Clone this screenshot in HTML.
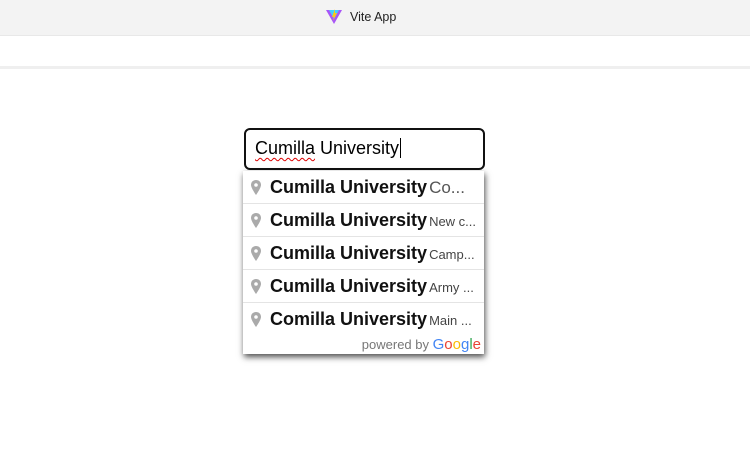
<!DOCTYPE html><html><head><style>
body{margin:0;width:750px;height:454px;background:#fff;font-family:"Liberation Sans",Arial,sans-serif;position:relative;overflow:hidden}
.top{position:absolute;left:0;top:0;width:750px;height:35px;background:#f3f3f3;border-bottom:1px solid #e8e8e8}
.top span{position:absolute;left:350px;top:10px;font-size:12.5px;color:#222}
.line{position:absolute;left:0;top:66px;width:750px;height:3px;background:#efefef}
.inp{position:absolute;left:244px;top:128px;width:237px;height:38px;border:2px solid #111;border-radius:6px;box-sizing:content-box}
.inp span{position:absolute;left:9px;top:8px;font-size:18px;color:#000}
.inp u{text-decoration:underline wavy #d00;text-decoration-thickness:1px;text-underline-offset:3px}
.cur{display:inline-block;width:1px;height:20px;background:#000;vertical-align:-4px;margin-left:1px}
.dd{position:absolute;left:243px;top:171px;width:241px;height:183px;background:#fff;box-shadow:1px 3px 6px rgba(0,0,0,.7)}
.r{height:32px;border-bottom:1px solid #e4e4e4;position:relative;white-space:nowrap;overflow:hidden}
.r svg{position:absolute;left:8px;top:9px}
.r .t{position:absolute;left:27px;top:6px;width:210px;overflow:hidden}
.r b{font-size:18px;color:#111}
.r i{font-style:normal;font-size:13px;color:#444;margin-left:2px}
.p{position:absolute;right:3px;bottom:1px;font-size:13px;color:#777}
</style></head><body>
<div class="top"><svg style="position:absolute;left:326px;top:9px" width="16" height="15" viewBox="0 0 16 15"><path d="M0 1 L16 1 L8 15Z" fill="#a855f7"/><path d="M3 1 L13 1 L8 10Z" fill="#41d1ff"/><path d="M9 0 L6 8 L8 8 L7 12 L11 4 L9 4Z" fill="#ffc517"/></svg><span>Vite App</span></div>
<div class="line"></div>
<div class="inp"><span><u>Cumilla</u> University<i class="cur"></i></span></div>
<div class="dd">
<div class="r"><svg width="10" height="15" viewBox="0 0 10 15"><path d="M5 0C2 0 0 2 0 5c0 3 5 10 5 10s5-7 5-10C10 2 8 0 5 0z" fill="#aaa"/><circle cx="5" cy="5" r="1.8" fill="#fff"/></svg><div class="t"><b>Cumilla University</b><i style="font-size:17px;color:#555">Co...</i></div></div>
<div class="r"><svg width="10" height="15" viewBox="0 0 10 15"><path d="M5 0C2 0 0 2 0 5c0 3 5 10 5 10s5-7 5-10C10 2 8 0 5 0z" fill="#aaa"/><circle cx="5" cy="5" r="1.8" fill="#fff"/></svg><div class="t"><b>Cumilla University</b><i>New c...</i></div></div>
<div class="r"><svg width="10" height="15" viewBox="0 0 10 15"><path d="M5 0C2 0 0 2 0 5c0 3 5 10 5 10s5-7 5-10C10 2 8 0 5 0z" fill="#aaa"/><circle cx="5" cy="5" r="1.8" fill="#fff"/></svg><div class="t"><b>Cumilla University</b><i>Camp...</i></div></div>
<div class="r"><svg width="10" height="15" viewBox="0 0 10 15"><path d="M5 0C2 0 0 2 0 5c0 3 5 10 5 10s5-7 5-10C10 2 8 0 5 0z" fill="#aaa"/><circle cx="5" cy="5" r="1.8" fill="#fff"/></svg><div class="t"><b>Cumilla University</b><i>Army ...</i></div></div>
<div class="r" style="border-bottom:none"><svg width="10" height="15" viewBox="0 0 10 15"><path d="M5 0C2 0 0 2 0 5c0 3 5 10 5 10s5-7 5-10C10 2 8 0 5 0z" fill="#aaa"/><circle cx="5" cy="5" r="1.8" fill="#fff"/></svg><div class="t"><b>Comilla University</b><i>Main ...</i></div></div>
<div class="p">powered by <span style="font-size:15px"><span style="color:#4285f4">G</span><span style="color:#ea4335">o</span><span style="color:#fbbc05">o</span><span style="color:#4285f4">g</span><span style="color:#34a853">l</span><span style="color:#ea4335">e</span></span></div>
</div>
</body></html>
